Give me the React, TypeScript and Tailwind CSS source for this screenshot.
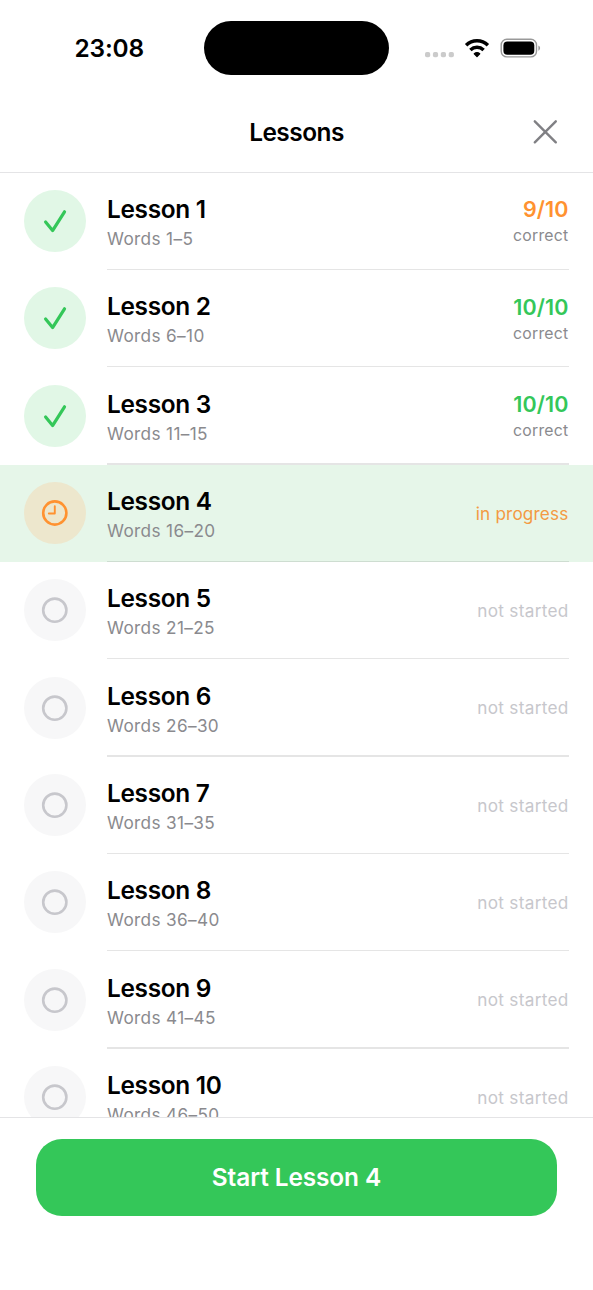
// App.tsx
type Status = 'done' | 'progress' | 'idle'

interface Lesson {
  id: number
  words: string
  status: Status
  score?: number
}

const LESSONS: Lesson[] = [
  { id: 1, words: '1–5', status: 'done', score: 9 },
  { id: 2, words: '6–10', status: 'done', score: 10 },
  { id: 3, words: '11–15', status: 'done', score: 10 },
  { id: 4, words: '16–20', status: 'progress' },
  { id: 5, words: '21–25', status: 'idle' },
  { id: 6, words: '26–30', status: 'idle' },
  { id: 7, words: '31–35', status: 'idle' },
  { id: 8, words: '36–40', status: 'idle' },
  { id: 9, words: '41–45', status: 'idle' },
  { id: 10, words: '46–50', status: 'idle' },
]

const BADGE_BG: Record<Status, string> = {
  done: 'bg-[#e1f7e6]',
  progress: 'bg-[#ede7cd]',
  idle: 'bg-[#f7f7f8]',
}

function StatusBar() {
  return (
    <div className="flex h-[92px] shrink-0 items-start pt-[21px]">
      <div className="flex h-[54px] w-[204px] items-center pt-px pl-[74.5px] text-[24.4px] font-semibold tracking-[-0.15px]">23:08</div>
      <div className="h-[54px] w-[185px] rounded-[27px] bg-black" />
      <div className="flex h-[54px] items-center pl-[36px]">
        <svg width="118" height="24" viewBox="0 0 118 24">
          {/* No signal */}
          <g fill="#cbcbcb">
            <rect x="0" y="16" width="5.2" height="5.2" rx="1.8" />
            <rect x="7.9" y="16" width="5.2" height="5.2" rx="1.8" />
            <rect x="15.8" y="16" width="5.2" height="5.2" rx="1.8" />
            <rect x="23.7" y="16" width="5.2" height="5.2" rx="1.8" />
          </g>
          {/* Wifi */}
          <g fill="none" stroke="#000" strokeWidth="3.5">
            <path d="M41.1 9.2a15.8 15.8 0 0 1 21.8 0" />
            <path d="M45.4 13.9a9.6 9.6 0 0 1 13.2 0" />
          </g>
          <path d="M52 20.5l-2.7-2.7a4 4 0 0 1 5.4 0z" stroke="#000" strokeWidth="1.3" strokeLinejoin="round" />
          {/* Battery */}
          <rect x="76.2" y="3.3" width="35.3" height="17.6" rx="5.6" fill="none" stroke="#999" strokeWidth="1.4" />
          <rect x="78.4" y="5.5" width="30.9" height="13.2" rx="4" />
          <path d="M113.4 9.6c2.2 1 2.2 4.2 0 5.2z" fill="#999" />
        </svg>
      </div>
    </div>
  )
}

function StatusIcon({ status }: { status: Status }) {
  return (
    <svg width="62" height="62" viewBox="0 0 62 62" fill="none" strokeLinecap="round" strokeLinejoin="round">
      {status === 'done' && <path d="M21.6 32l7 8.6L40.5 21.8" stroke="#34c759" strokeWidth="3.2" />}
      {status === 'progress' && (
        <g stroke="#ff9230">
          <circle cx="30.8" cy="31" r="11.6" strokeWidth="2.6" />
          <path d="M30.8 24.3v7.2h-6" strokeWidth="1.9" />
        </g>
      )}
      {status === 'idle' && <circle cx="30.8" cy="31.2" r="11.6" stroke="#c7c7cc" strokeWidth="2.6" />}
    </svg>
  )
}

function Result({ lesson }: { lesson: Lesson }) {
  if (lesson.status === 'progress') {
    return <span className="pt-px text-[17.2px] tracking-[0.15px] text-[#f39a43]">in progress</span>
  }
  if (lesson.status === 'idle') {
    return <span className="pt-px text-[17.2px] tracking-[0.28px] text-[#c7c7cc]">not started</span>
  }
  return (
    <div className="flex flex-col items-end pt-[3px]">
      <span className={`text-[21.5px] leading-[27px] font-semibold tracking-[0.1px] ${lesson.score === 10 ? 'text-[#34c759]' : 'text-[#ff9230]'}`}>
        {lesson.score}/10
      </span>
      <span className="text-[15.8px] leading-[25px] tracking-[0.25px] text-[#8a8a8e]">correct</span>
    </div>
  )
}

function LessonRow({ lesson }: { lesson: Lesson }) {
  return (
    <div className={`flex h-[97.37px] shrink-0 flex-col pl-[24px] pr-[24.5px] ${lesson.status === 'progress' ? 'bg-[#e6f6e9]' : ''}`}>
      <div className="flex flex-1 items-center pt-[0.6px]">
        <div className={`h-[62px] w-[62px] rounded-full ${BADGE_BG[lesson.status]}`}>
          <StatusIcon status={lesson.status} />
        </div>
        <div className="flex flex-1 flex-col pt-[4px] pl-[21px]">
          <span className="text-[24.4px] leading-[31px] font-semibold tracking-[-0.3px]">Lesson {lesson.id}</span>
          <span className="text-[17.2px] leading-[27px] tracking-[0.35px] text-[#8a8a8e]">Words {lesson.words}</span>
        </div>
        <Result lesson={lesson} />
      </div>
      <div className="ml-[82.5px] h-[1.4px] shrink-0 bg-black/10" />
    </div>
  )
}

export default function App() {
  return (
    <div className="flex h-[1290px] w-[593px] flex-col overflow-hidden bg-white font-['Inter',sans-serif] text-black">
      <StatusBar />

      {/* Header */}
      <header className="grid h-[80.6px] shrink-0 grid-cols-[1fr_auto_1fr] items-center border-b border-[#e4e4e6]">
        <h1 className="col-start-2 pt-[1.5px] text-[24.4px] font-semibold tracking-[-0.5px]">Lessons</h1>
        <button type="button" aria-label="Close" className="mr-[34px] justify-self-end">
          <svg width="28" height="28" viewBox="0 0 28 28" stroke="#808084" strokeWidth="2.4" strokeLinecap="round">
            <path d="M3.8 3.3l21 21M24.8 3.3l-21 21" />
          </svg>
        </button>
      </header>

      {/* Lessons */}
      <main className="flex min-h-0 flex-1 flex-col overflow-hidden">
        {LESSONS.map((lesson) => (
          <LessonRow key={lesson.id} lesson={lesson} />
        ))}
      </main>

      {/* Start button */}
      <footer className="h-[173px] shrink-0 border-t border-[#e4e4e6] px-[35.7px] pt-[20.6px]">
        <button
          type="button"
          className="h-[77px] w-full rounded-[26px] bg-[#34c759] pt-px text-[24.4px] font-semibold tracking-[-0.1px] text-white"
        >
          Start Lesson 4
        </button>
      </footer>
    </div>
  )
}
